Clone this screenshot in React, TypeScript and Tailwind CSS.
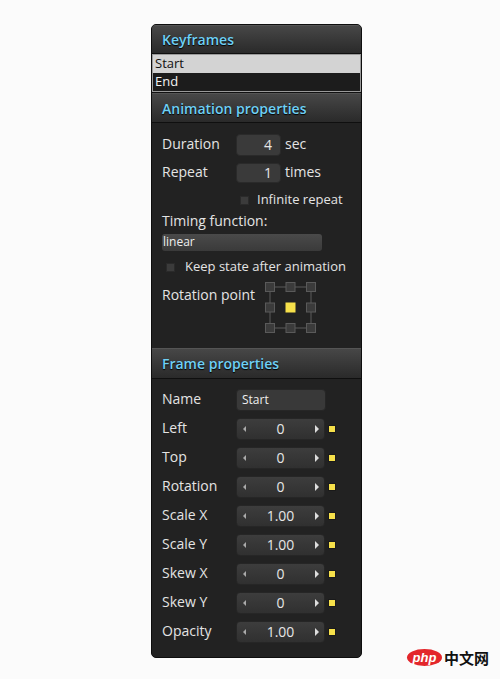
import React from "react";

const font = { fontFamily: '"Open Sans", "Liberation Sans", sans-serif' };

const Header: React.FC<{ title: string; className?: string }> = ({ title, className }) => (
  <div
    className={
      "flex items-center pl-[10px] bg-gradient-to-b from-[#474747] to-[#2a2a2a] border-t border-t-[#555] border-b border-b-[#0f0f0f] text-[14px] font-semibold text-[#6fd0f5] [text-shadow:0_1px_1px_#000] " +
      (className ?? "")
    }
  >
    {title}
  </div>
);

const Check: React.FC = () => (
  <span className="block w-[9px] h-[9px] bg-[#3b3b3b] border border-[#2a2a2a]" />
);

const label = "w-[74px] mb-[3px] text-[14px] font-medium text-[#e4e4e4]";

const Spinner: React.FC<{ name: string; value: string }> = ({ name, value }) => (
  <div className="flex items-center h-[22px]">
    <span className={label}>{name}</span>
    <div className="relative flex items-center justify-center pb-[2px] w-[89px] h-[22px] rounded-[4px] bg-gradient-to-b from-[#3d3d3d] to-[#303030] border border-[#262626] text-[14px] font-medium text-[#e6e6e6]">
      <span className="absolute left-[6px] top-[7px] w-0 h-0 border-y-[3px] border-y-transparent border-r-[3px] border-r-[#aaa]" />
      {value}
      <span className="absolute right-[5px] top-[6px] w-0 h-0 border-y-[4px] border-y-transparent border-l-[4px] border-l-[#ddd]" />
    </div>
    <span className="ml-[3px] w-[8px] h-[8px] bg-[#f6e04a] border border-[#1a1a1a]" />
  </div>
);

const RotationGrid: React.FC = () => {
  const p = [0.5, 21, 41.5];
  return (
    <svg width="51" height="51" viewBox="0 0 51 51">
      <g stroke="#5a5a5a" strokeWidth="1">
        <line x1="5" y1="5" x2="46" y2="5" />
        <line x1="5" y1="46" x2="46" y2="46" />
        <line x1="5" y1="5" x2="5" y2="46" />
        <line x1="46" y1="5" x2="46" y2="46" />
      </g>
      {p.map((y, r) =>
        p.map((x, c) => (
          <rect
            key={r + "-" + c}
            x={x}
            y={y}
            width="9"
            height="9"
            fill={r === 1 && c === 1 ? "#f6e04a" : "#3b3b3b"}
            stroke={r === 1 && c === 1 ? "#f6e04a" : "#5a5a5a"}
          />
        ))
      )}
    </svg>
  );
};

export default function App() {
  const frames = [
    ["Left", "0"],
    ["Top", "0"],
    ["Rotation", "0"],
    ["Scale X", "1.00"],
    ["Scale Y", "1.00"],
    ["Skew X", "0"],
    ["Skew Y", "0"],
    ["Opacity", "1.00"],
  ];

  return (
    <div className="relative w-[500px] h-[679px] bg-[#fbfbfb] pt-[24px] pl-[151px]" style={font}>
      <div className="w-[211px] bg-[#222] border border-[#0e0e0e] rounded-[5px] overflow-hidden">
        <Header title="Keyframes" className="h-[29px]" />
        <div className="border border-[#9a9a9a] text-[13px] font-medium">
          <div className="h-[18px] flex items-center pl-[2px] bg-[#d3d3d3] text-[#111]">Start</div>
          <div className="h-[18px] flex items-center pl-[2px] bg-[#1c1c1c] text-[#f2f2f2]">End</div>
        </div>
        <div className="h-[1px] bg-[#111]" />
        <Header title="Animation properties" className="h-[30px]" />

        <div className="pl-[10px] pt-[11px] pb-[15px]">
          <div className="flex items-center h-[22px]">
            <span className={label}>Duration</span>
            <div className="w-[45px] h-[22px] rounded-[4px] bg-[#3a3a3a] border border-[#2a2a2a] flex items-center justify-end pr-[8px] pb-[2px] text-[14px] font-medium text-[#e6e6e6]">
              4
            </div>
            <span className="ml-[4px] mb-[3px] text-[14px] font-medium text-[#e4e4e4]">sec</span>
          </div>
          <div className="mt-[6px] flex items-center h-[22px]">
            <span className={label}>Repeat</span>
            <div className="w-[45px] h-[20px] rounded-[4px] bg-[#3a3a3a] border border-[#2a2a2a] flex items-center justify-end pr-[8px] pb-[1px] text-[14px] font-medium text-[#e6e6e6]">
              1
            </div>
            <span className="ml-[4px] mb-[3px] text-[14px] font-medium text-[#e4e4e4]">times</span>
          </div>
          <div className="mt-[8px] h-[16px] flex items-center pl-[78px] gap-[8px]">
            <Check />
            <span className="mb-[1px] text-[13px] font-medium text-[#e4e4e4]">Infinite repeat</span>
          </div>
          <div className="mt-[4px] h-[19px] flex items-center pb-[2px] text-[14px] font-medium text-[#e4e4e4]">Timing function:</div>
          <div className="mt-[3px] w-[160px] h-[17px] rounded-[3px] bg-gradient-to-b from-[#4a4a4a] to-[#3a3a3a] flex items-center pl-[1px] pb-[1px] text-[12px] font-medium text-[#eee]">
            linear
          </div>
          <div className="mt-[8px] h-[16px] flex items-center pl-[4px] gap-[10px]">
            <Check />
            <span className="mb-[1px] text-[13px] font-medium text-[#e4e4e4]">Keep state after animation</span>
          </div>
          <div className="mt-[7px] flex items-start h-[51px]">
            <span className="w-[103px] mt-[2px] text-[14px] font-medium text-[#e4e4e4]">Rotation point</span>
            <RotationGrid />
          </div>
        </div>

        <Header title="Frame properties" className="h-[31px]" />

        <div className="pl-[10px] pt-[10px] pb-[14px] flex flex-col gap-[7px]">
          <div className="flex items-center h-[22px]">
            <span className={label}>Name</span>
            <div className="w-[90px] h-[22px] rounded-[4px] bg-[#393939] border border-[#262626] flex items-center pl-[5px] pb-[1px] text-[12px] font-medium text-[#eee]">
              Start
            </div>
          </div>
          {frames.map(([l, v]) => (
            <Spinner key={l} name={l} value={v} />
          ))}
        </div>
      </div>

      <div className="absolute left-[407px] top-[649px] flex items-center gap-[2px]">
        <div className="w-[35px] h-[17px] rounded-[50%] bg-[#e3262b] flex items-center justify-center text-[13px] italic font-bold text-white leading-none" style={{ fontFamily: '"Liberation Sans", sans-serif' }}>
          php
        </div>
        <span className="text-[15px] font-bold text-[#111] leading-none" style={{ fontFamily: '"Noto Sans CJK SC", sans-serif' }}>
          中文网
        </span>
      </div>
    </div>
  );
}
